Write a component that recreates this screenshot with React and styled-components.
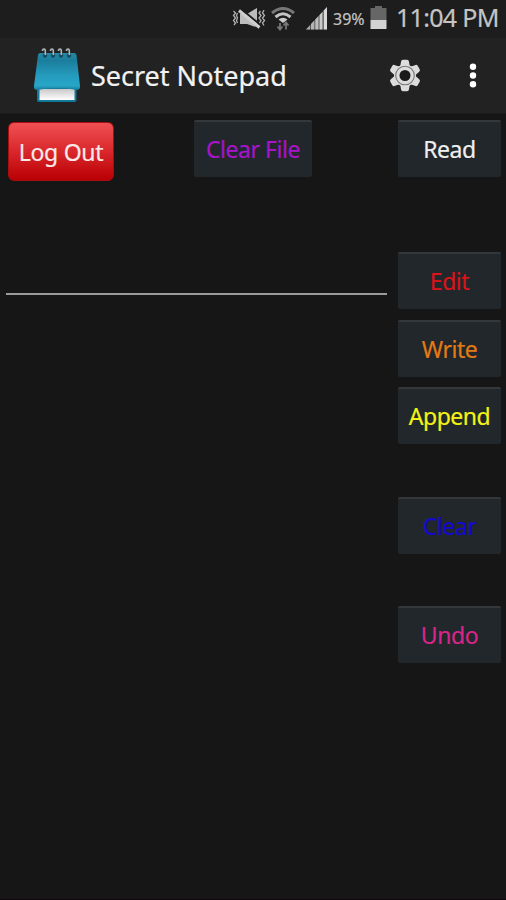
import styled, { createGlobalStyle } from 'styled-components';

const GlobalStyle = createGlobalStyle`
  * {
    box-sizing: border-box;
  }

  body {
    margin: 0;
    background-color: #161616;
    font-family: 'Noto Sans', 'Open Sans', sans-serif;
  }

  button {
    font-family: inherit;
    padding: 0;
    border: 0;
  }
`;

const Screen = styled.div`
  display: flex;
  flex-direction: column;
  width: 506px;
  height: 900px;
  overflow: hidden;
  background-color: #161616;
  border-bottom: 1px solid #0e080e;
`;

const StatusBar = styled.div`
  display: flex;
  align-items: center;
  justify-content: flex-end;
  height: 38px;
  padding: 0 7px 3px 0;
  background-color: #1d1d1d;
  color: #c4c4c4;

  svg {
    display: block;
    flex: none;
  }
`;

const StatusIcons = styled.div`
  display: flex;
  align-items: center;
  gap: 4px;
`;

const SignalSlot = styled.div`
  padding: 2px 0 0 9px;
`;

const BatteryPercent = styled.span`
  width: 33px;
  margin: 2px 4px 0 5px;
  font-size: 16px;
  line-height: 22px;
  white-space: nowrap;
  -webkit-text-stroke: .2px currentColor;
`;

const Clock = styled.span`
  width: 103px;
  margin-left: 9px;
  padding-bottom: 2px;
  font-size: 25px;
  line-height: 30px;
  letter-spacing: -.7px;
  white-space: nowrap;
  -webkit-text-stroke: .2px currentColor;
`;

const ActionBar = styled.header`
  display: flex;
  align-items: center;
  height: 76px;
  padding: 0 24px 0 32px;
  background-color: #222;
  border-bottom: 1px solid #1b1b1b;

  svg {
    display: block;
  }
`;

const Title = styled.h1`
  flex: 1;
  margin: 0 0 0 9px;
  color: #f2f2f2;
  font-size: 27px;
  font-weight: 400;
  letter-spacing: 0;
  white-space: nowrap;
  -webkit-text-stroke: .2px currentColor;
`;

const IconButton = styled.button`
  margin-left: ${({ $gap }) => $gap || 0}px;
  background: none;
`;

const TopRow = styled.div`
  display: flex;
  padding: 6px 5px 0 8px;
`;

const LogOutButton = styled.button`
  width: 106px;
  height: 59px;
  margin: 2px 80px 0 0;
  border: 1px solid #a80d10;
  border-radius: 6px;
  background: linear-gradient(#ef5053, #d9272b 50%, #b90004);
  color: #fbe9e9;
  font-size: 23px;
  letter-spacing: -.3px;
  -webkit-text-stroke: .2px currentColor;
`;

const DarkButton = styled.button`
  width: ${({ $width }) => $width || 103}px;
  height: 57px;
  margin-top: ${({ $gap }) => $gap || 0}px;
  padding-bottom: 2px;
  border-top: 2px solid #34383a;
  border-radius: 2px;
  background-color: #21272a;
  color: ${({ $color }) => $color};
  font-size: 23px;
  letter-spacing: -.45px;
  -webkit-text-stroke: .2px currentColor;
`;

const ReadButton = styled(DarkButton)`
  margin-left: auto;
`;

const Editor = styled.main`
  display: flex;
  justify-content: space-between;
  padding: 71px 5px 0 6px;
`;

const NoteField = styled.div`
  width: 381px;
  height: 43px;
  border-bottom: 2px solid #9b9b9b;
`;

const Actions = styled.div`
  display: flex;
  flex-direction: column;
`;

function VibrateMuteIcon() {
  return (
    <svg width="34" height="22" viewBox="0 0 34 22" fill="none">
      <path d="M8 7h7l10-6v18.500h-3L15 17H8z" fill="#bcbcbc" />
      <path d="M8.500 1.500l21 17.300" stroke="#1d1d1d" strokeWidth="2" />
      <path d="M7 3.500l20.500 17" stroke="#cecece" strokeWidth="3" />
      <path
        d="M1.500 4l2 2-2 2.500 2 2.500-2 2.500 2 2.500-1.500 2M5.500 6l-1 2.500 1 2.500-1 2.500 1 2.500M28.500 4l-1.500 2 2 2.500-2 2.500 2 2.500-1.500 2.500M32 3l-1.500 3 2 2.500-2 2.500 2 2.500-2 2.500 1.500 2.500"
        stroke="#b0b0b0"
        strokeWidth="1.300"
      />
    </svg>
  );
}

function WifiIcon() {
  return (
    <svg width="26" height="26" viewBox="0 0 26 26" fill="none">
      <path d="M2 8Q13-1 24 8" stroke="#777" strokeWidth="3" />
      <path d="M5.500 12Q13 5.500 20.500 12" stroke="#c4c4c4" strokeWidth="3" />
      <path d="M8.500 14.500Q13 11 17.500 14.500L13 18z" fill="#cacaca" />
      <path d="M10 18v6M7.500 21.500L10 24.500l2.500-3M16 24.500v-6M13.500 20.500l2.500-3 2.500 3" stroke="#777" strokeWidth="1.800" />
    </svg>
  );
}

function SignalIcon() {
  return (
    <svg width="23" height="23" viewBox="0 0 23 23">
      <path d="M1 22.500L22 0v22.500z" fill="#555" />
      <path d="M1 22.500l4-4.300v4.300z" fill="#a8a8a8" />
      <path d="M6 22.500v-5.400l3.300-3.500v8.900z" fill="#b4b4b4" />
      <path d="M10.300 22.500v-9.900l3.200-3.500v13.400z" fill="#bebebe" />
      <path d="M14.500 22.500V8l3-3.200v17.700z" fill="#cacaca" />
      <path d="M18.800 22.500V3.400L22 0v22.500z" fill="#dadada" />
    </svg>
  );
}

function BatteryIcon() {
  return (
    <svg width="17" height="23" viewBox="0 0 17 23">
      <path d="M5 0h7v2h4.500v12H.500V2H5z" fill="#666" />
      <path d="M.500 14h16v9H.500z" fill="#d2d2d2" />
    </svg>
  );
}

function NotepadIcon() {
  return (
    <svg width="50" height="58" viewBox="0 0 50 58">
      <defs>
        <linearGradient id="cover" x1="0" y1="0" x2="0" y2="1">
          <stop offset="0" stopColor="#2389a8" />
          <stop offset=".2" stopColor="#1b7d9c" />
          <stop offset=".6" stopColor="#259bbd" />
          <stop offset=".88" stopColor="#27a6c8" />
          <stop offset="1" stopColor="#17799a" />
        </linearGradient>
        <linearGradient id="pages" x1="0" y1="0" x2="0" y2="1">
          <stop offset="0" stopColor="#c8c8c8" />
          <stop offset="1" stopColor="#fff" />
        </linearGradient>
      </defs>
      <path d="M5 40h39.500v13q0 2-2 2H7q-2 0-2-2z" fill="#13799a" />
      <path d="M7.500 42h35v11h-35z" fill="url(#pages)" />
      <path d="M8 6h34q2 0 2.500 2L48 39q.3 4-3 4-20-4-40 0-3.500 0-3-4L6 8q.4-2 2-2z" fill="url(#cover)" />
      {[13, 21, 29, 37].map((x) => (
        <g key={x}>
          <circle cx={x} cy="8.500" r="2.200" fill="#174c5e" />
          <path d={`M${x - 2.5} 4q0-2 1.500-2 1.300 0 1.300 2v4`} stroke="#aeb6ba" strokeWidth="1.600" fill="none" />
        </g>
      ))}
    </svg>
  );
}

function GearIcon() {
  return (
    <svg width="34" height="34" viewBox="-17 -16.500 34 34">
      {[0, 60, 120].map((angle) => (
        <path
          key={angle}
          d="M-2-15.800h4q1.800 0 2 2l.8 4.800v18l-.8 4.800q-.2 2-2 2h-4q-1.800 0-2-2l-.8-4.800v-18l.8-4.800q.2-2 2-2z"
          transform={`rotate(${angle})`}
          fill="#dcdcdc"
        />
      ))}
      <circle r="11" fill="#dcdcdc" />
      <circle r="9.300" fill="none" stroke="#777" strokeWidth="1.100" />
      <circle r="5.500" fill="#1a1a1a" />
    </svg>
  );
}

function MoreIcon() {
  return (
    <svg width="18" height="30" viewBox="0 0 18 30" fill="#fff">
      <circle cx="9" cy="5.800" r="3.200" />
      <circle cx="9" cy="14.500" r="3.200" />
      <circle cx="9" cy="23.200" r="3.200" />
    </svg>
  );
}

const noteActions = [
  { label: 'Edit', color: '#d9141b', gap: 0 },
  { label: 'Write', color: '#e27a16', gap: 11 },
  { label: 'Append', color: '#f3f315', gap: 10 },
  { label: 'Clear', color: '#1509cf', gap: 53 },
  { label: 'Undo', color: '#d82588', gap: 52 },
];

export default function App() {
  return (
    <Screen>
      <GlobalStyle />
      <StatusBar>
        <StatusIcons>
          <VibrateMuteIcon />
          <WifiIcon />
        </StatusIcons>
        <SignalSlot>
          <SignalIcon />
        </SignalSlot>
        <BatteryPercent>39%</BatteryPercent>
        <BatteryIcon />
        <Clock>11:04 PM</Clock>
      </StatusBar>
      <ActionBar>
        <NotepadIcon />
        <Title>Secret Notepad</Title>
        <IconButton type="button" aria-label="Settings">
          <GearIcon />
        </IconButton>
        <IconButton type="button" aria-label="More" $gap={42}>
          <MoreIcon />
        </IconButton>
      </ActionBar>
      <TopRow>
        <LogOutButton type="button">Log Out</LogOutButton>
        <DarkButton type="button" $color="#a714c9" $width={118}>Clear File</DarkButton>
        <ReadButton type="button" $color="#efefef">Read</ReadButton>
      </TopRow>
      <Editor>
        <NoteField />
        <Actions>
          {noteActions.map(({ label, color, gap }) => (
            <DarkButton key={label} type="button" $color={color} $gap={gap}>
              {label}
            </DarkButton>
          ))}
        </Actions>
      </Editor>
    </Screen>
  );
}
